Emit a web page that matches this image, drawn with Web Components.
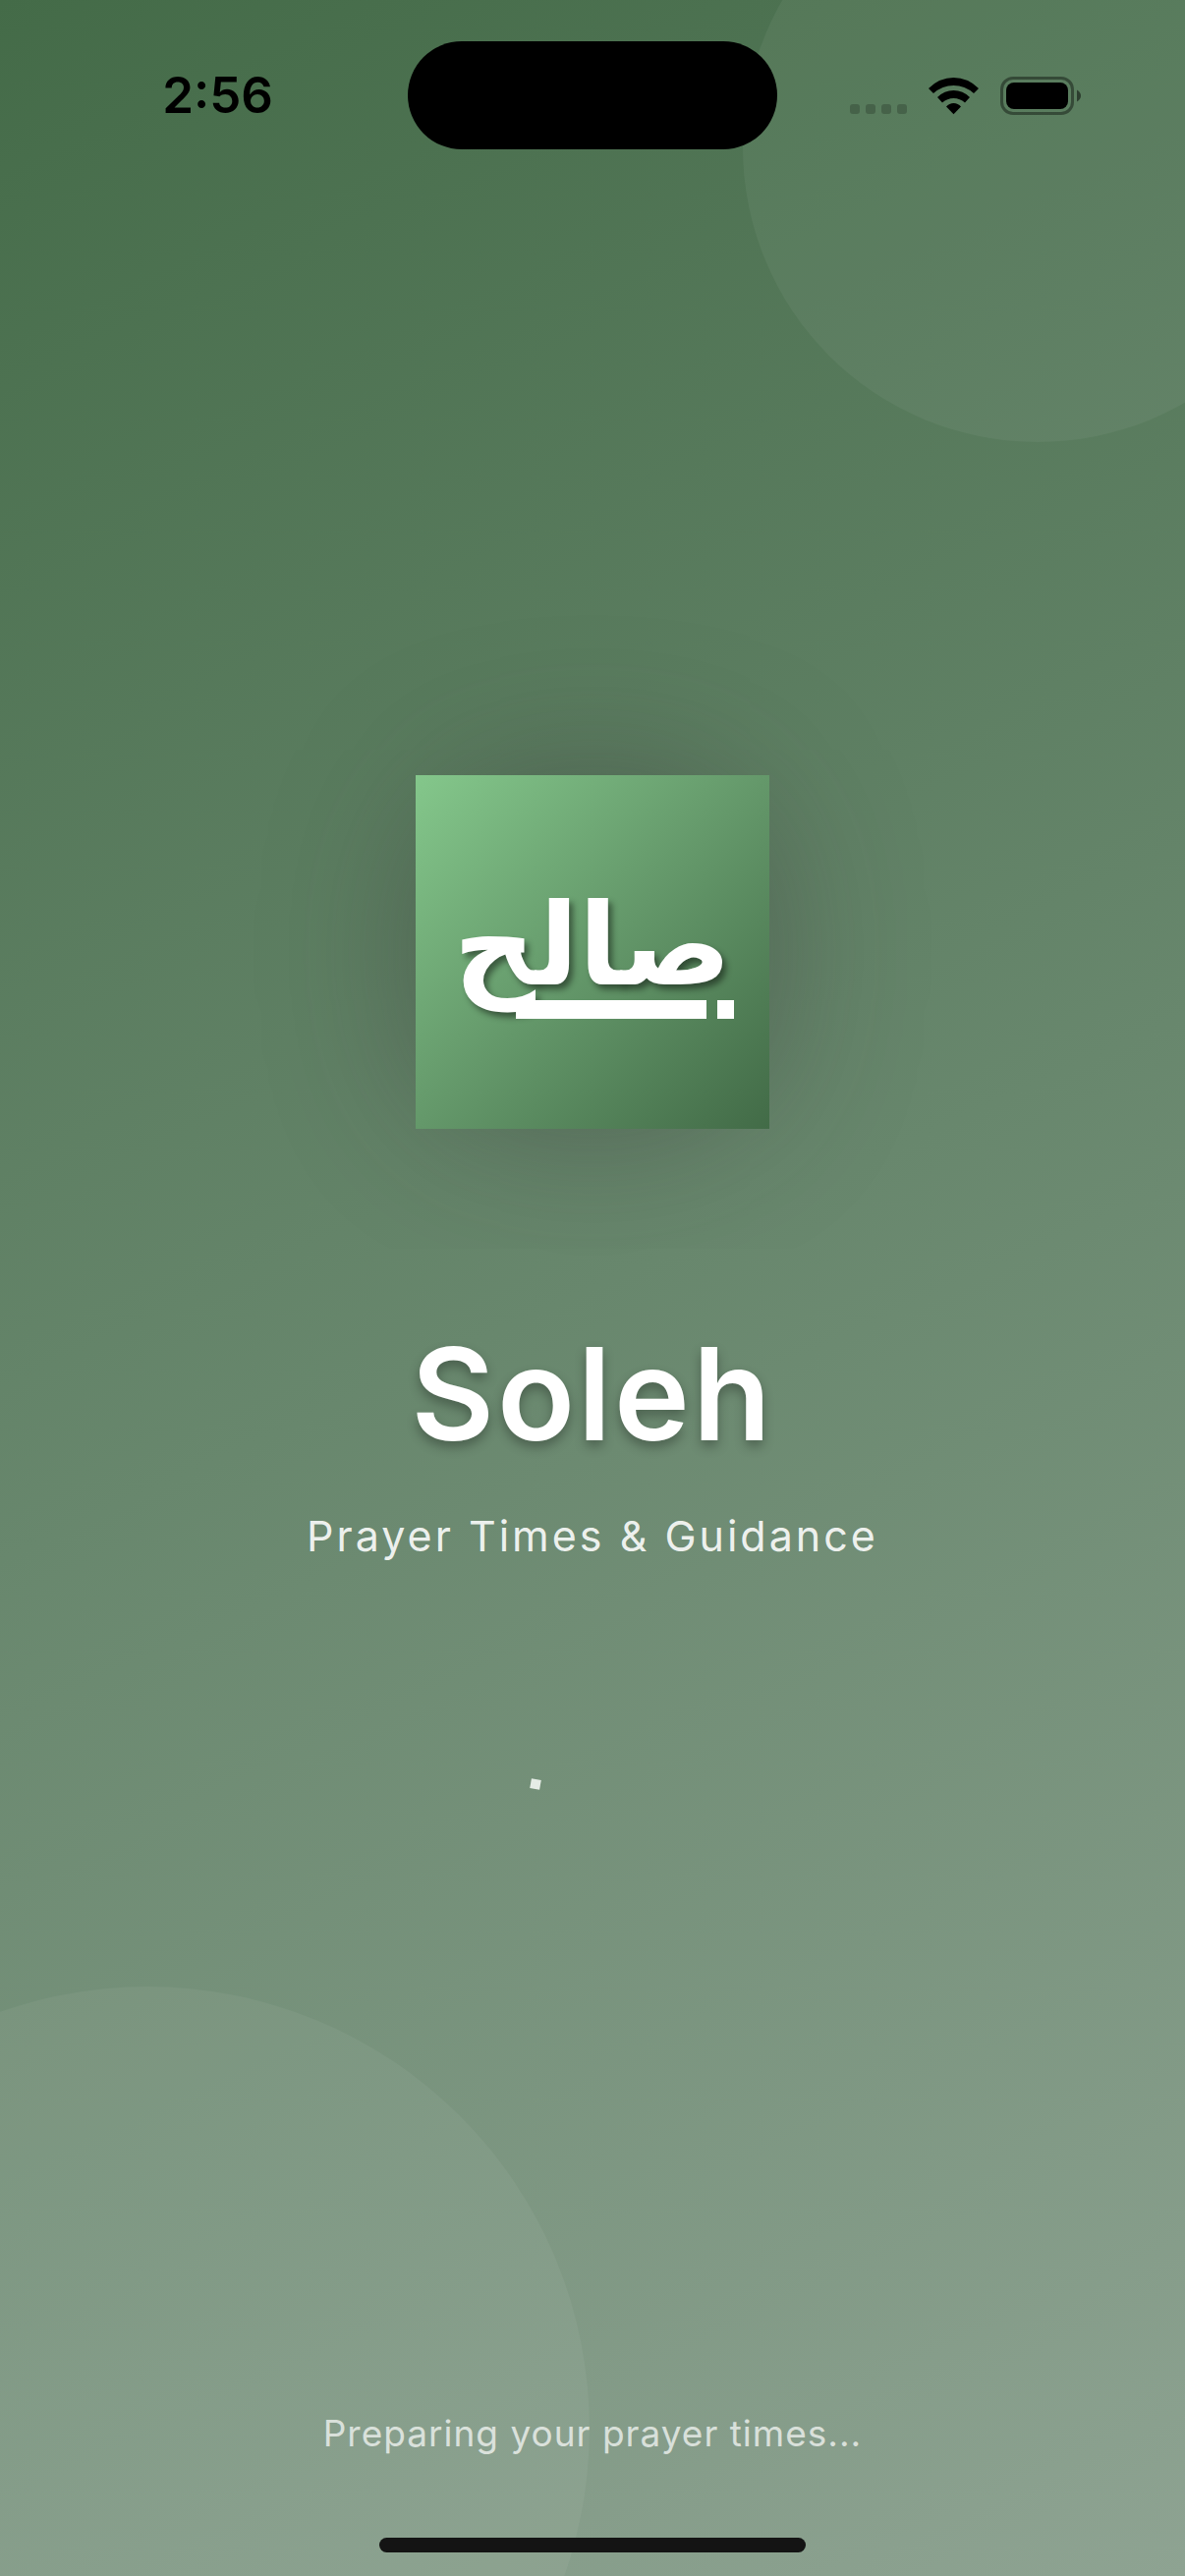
<!DOCTYPE html>
<html lang="en">
<head>
<meta charset="utf-8">
<meta name="viewport" content="width=device-width, initial-scale=1">
<title>Soleh</title>
<style>
  html, body { margin: 0; min-height: 100%; }
  body { font-family: Inter, "Open Sans", sans-serif; color: #fff; background: #446b48; }
</style>
</head>
<body>
<soleh-splash></soleh-splash>

<template id="splash">
  <style>
    :host {
      display: flex; flex-direction: column; position: relative; overflow: hidden;
      min-height: 100vh; isolation: isolate;
      background: linear-gradient(155.3deg, #446b48, #68876d 50%, #8ea392);
    }
    .orb { position: absolute; z-index: -1; border-radius: 50%; background: rgba(255,255,255,.05); }
    .orb.top { width: 600px; height: 600px; top: -150px; right: -150px; }
    .orb.bottom { width: 900px; height: 900px; bottom: -300px; left: -300px; }
    main { flex: 1; display: flex; flex-direction: column; align-items: center; justify-content: center; }
    h1 {
      margin: 190px 0 0; font-size: 130px; line-height: 160px; font-weight: 600;
      letter-spacing: 3px; text-shadow: 0 6px 12px rgba(0,0,0,.3);
    }
    p { margin: 0; font-weight: 400; text-align: center; }
    .tagline { margin: 34px 0 204px; font-size: 43px; line-height: 60px; letter-spacing: 3px; color: rgba(255,255,255,.9); }
    footer { display: flex; flex-direction: column; align-items: center; gap: 79px; padding-bottom: 24px; }
    .status { font-size: 37px; line-height: 54px; letter-spacing: 1px; color: rgba(255,255,255,.7); }
    .home { width: 36%; height: 15px; border-radius: 8px; background: #141414; }
  </style>
  <div class="orb top"></div>
  <div class="orb bottom"></div>
  <status-bar time="2:56"></status-bar>
  <main>
    <soleh-logo>صالح</soleh-logo>
    <h1>Soleh</h1>
    <p class="tagline">Prayer Times &amp; Guidance</p>
    <loading-spark></loading-spark>
  </main>
  <footer>
    <p class="status">Preparing your prayer times...</p>
    <div class="home"></div>
  </footer>
</template>

<template id="bar">
  <style>
    :host { display: grid; grid-template-columns: 1fr 376px 1fr; align-items: center; height: 110px; padding: 42px 0 22px; color: #000; }
    time { justify-self: center; padding-left: 28px; font-size: 51px; line-height: 60px; font-weight: 600; }
    .island { height: 110px; border-radius: 55px; background: #000; }
    .icons { justify-self: center; display: flex; align-items: center; gap: 22px; padding-right: 32px; }
    svg { display: block; }
  </style>
  <time></time>
  <div class="island"></div>
  <div class="icons">
    <svg width="58" height="39" viewBox="0 0 58 39" opacity=".2" aria-hidden="true">
      <rect y="28" width="10" height="10" rx="3"/><rect x="16" y="28" width="10" height="10" rx="3"/>
      <rect x="32" y="28" width="10" height="10" rx="3"/><rect x="48" y="28" width="10" height="10" rx="3"/>
    </svg>
    <svg width="51" height="39" viewBox="0 0 51 39" aria-hidden="true">
      <path d="M0 12Q11 1 25.500 1T51 12L46 17Q37 9 25.500 9T5 17Z"/>
      <path d="M9 21Q16 14 25.500 14T42 21L37 26.500Q32 22 25.500 22T14 26.500Z"/>
      <path d="M18 30.500Q21 27 25.500 27T33 30.500L25.500 38.200Z"/>
    </svg>
    <svg width="82" height="39" viewBox="0 0 82 39" aria-hidden="true">
      <rect x="1.500" y="1.500" width="72" height="36" rx="11.500" fill="none" stroke="#000" stroke-width="3" opacity=".4"/>
      <rect x="6" y="6" width="63" height="27" rx="8"/>
      <path d="M78 13.500Q82 16 82 19.500T78 25.500Z" opacity=".5"/>
    </svg>
  </div>
</template>

<template id="logo">
  <style>
    :host { display: block; border-radius: 120px; box-shadow: 0 0 150px rgba(50,45,50,.36); }
    .tile { display: grid; width: 360px; height: 360px; background: linear-gradient(135deg, #84c78b, #64986a 50%, #426b47); }
    .word, .underline { grid-area: 1 / 1; }
    .word {
      justify-self: center; align-self: center; direction: rtl; white-space: nowrap; padding-bottom: 14px;
      font-family: "DejaVu Sans", sans-serif; font-weight: 700; font-size: 116px; line-height: 140px;
      text-shadow: 4px 5px 6px rgba(0,0,0,.45);
    }
    .underline { display: flex; justify-content: flex-end; align-items: flex-start; gap: 11px; padding: 229px 36px 0 0; }
    i { display: block; height: 19px; width: 17px; background: #fff; }
    i:first-child { width: 194px; }
  </style>
  <div class="tile">
    <div class="word" lang="ar"><slot></slot></div>
    <div class="underline"><i></i><i></i></div>
  </div>
</template>

<template id="spark">
  <style>
    :host { display: flex; align-items: center; width: 126px; height: 38px; }
    i { width: 10px; height: 10px; background: #e5ece6; transform: rotate(10deg); }
  </style>
  <i></i>
</template>

<script>
  class TemplateElement extends HTMLElement {
    constructor() {
      super();
      const source = document.getElementById(this.constructor.template);
      this.attachShadow({ mode: "open" }).append(source.content.cloneNode(true));
    }
  }
  class StatusBar extends TemplateElement {
    static template = "bar";
    connectedCallback() { this.shadowRoot.querySelector("time").textContent = this.getAttribute("time"); }
  }
  class SolehLogo extends TemplateElement { static template = "logo"; }
  class LoadingSpark extends TemplateElement { static template = "spark"; }
  class SolehSplash extends TemplateElement { static template = "splash"; }
  customElements.define("status-bar", StatusBar);
  customElements.define("soleh-logo", SolehLogo);
  customElements.define("loading-spark", LoadingSpark);
  customElements.define("soleh-splash", SolehSplash);
</script>
</body>
</html>
